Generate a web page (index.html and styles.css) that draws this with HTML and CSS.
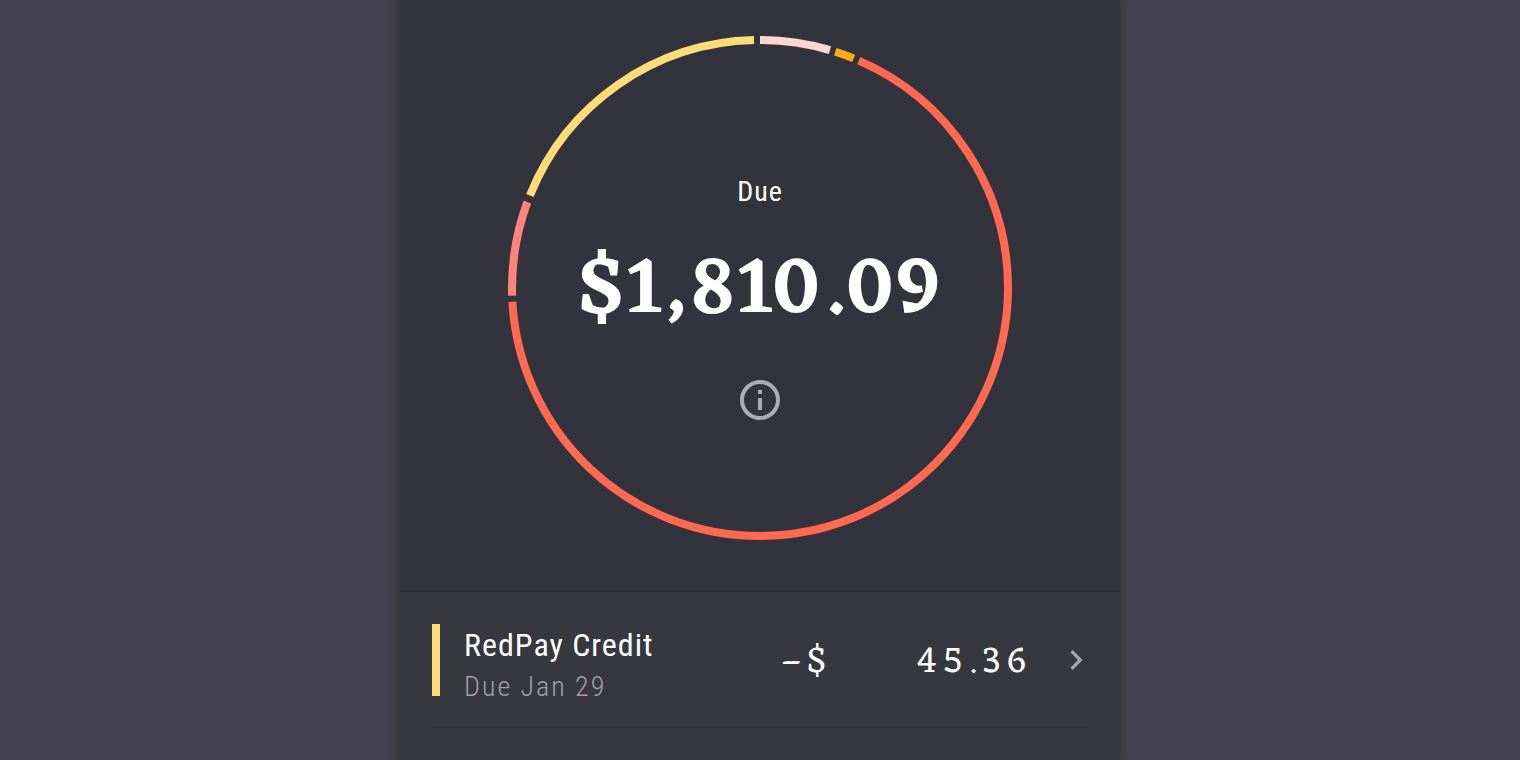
FILE: index.html
```
<!DOCTYPE html>
<html lang="en">
<head>
<meta charset="utf-8">
<meta name="viewport" content="width=device-width, initial-scale=1">
<title>Bills</title>
<link rel="stylesheet" href="styles.css">
</head>
<body>
<main class="panel">
  <section class="summary">
    <div class="chart">
      <svg class="ring" viewBox="0 0 504 504" aria-hidden="true">
        <g fill="none" stroke-width="8" transform="rotate(-90 252 252)">
          <circle cx="252" cy="252" r="248" pathLength="3600" stroke="#ffd7d0" stroke-dasharray="164 3436"/>
          <circle cx="252" cy="252" r="248" pathLength="3600" stroke="#ffac12" stroke-dasharray="45 3555" stroke-dashoffset="-177"/>
          <circle cx="252" cy="252" r="248" pathLength="3600" stroke="#ff6951" stroke-dasharray="2433 1167" stroke-dashoffset="-235"/>
          <circle cx="252" cy="252" r="248" pathLength="3600" stroke="#ff857c" stroke-dasharray="221 3379" stroke-dashoffset="-2682"/>
          <circle cx="252" cy="252" r="248" pathLength="3600" stroke="#ffdc78" stroke-dasharray="667 2933" stroke-dashoffset="-2919"/>
        </g>
      </svg>
      <div class="total">
        <p class="total-label">Due</p>
        <p class="total-amount">$1,810.09</p>
        <button class="info" type="button" aria-label="Information">
          <svg viewBox="0 0 24 24" width="48" height="48" fill="currentColor" aria-hidden="true"><path d="M11 17h2v-6h-2v6zm1-15C6.480 2 2 6.480 2 12s4.480 10 10 10 10-4.480 10-10S17.520 2 12 2zm0 18c-4.410 0-8-3.590-8-8s3.590-8 8-8 8 3.590 8 8-3.590 8-8 8zM11 9h2V7h-2v2z"/></svg>
        </button>
      </div>
    </div>
  </section>
  <ul class="bills">
    <li class="bill">
      <a class="bill-link" href="#redpay">
        <span class="marker"></span>
        <span class="details">
          <span class="name">RedPay Credit</span>
          <span class="due">Due Jan 29</span>
        </span>
        <span class="sign">–$</span>
        <span class="amount">45.36</span>
        <svg class="chevron" viewBox="0 0 24 24" fill="currentColor" aria-hidden="true"><path d="M10 6L8.590 7.410 13.170 12l-4.580 4.590L10 18l6-6z"/></svg>
      </a>
    </li>
  </ul>
</main>
</body>
</html>
```
FILE: styles.css
```
* { box-sizing: border-box; }

body {
  margin: 0;
  background: #444250;
  color: #fff;
  font-family: "Roboto Condensed", "Liberation Sans Narrow", Roboto, sans-serif;
}

.panel {
  width: 100%;
  max-width: 720px;
  min-height: 100vh;
  margin: 0 auto;
  background: #373740;
  box-shadow: -1px 0 6px 4px #383741;
}

.summary {
  display: flex;
  justify-content: center;
  padding: 36px 24px 50px;
  background: #33333d;
  border-bottom: 2px solid #2c2c35;
}

.chart {
  display: grid;
  width: 100%;
  max-width: 504px;
}

.ring, .total { grid-area: 1 / 1; }

.ring { display: block; width: 100%; }

.total {
  display: flex;
  flex-direction: column;
  align-items: center;
  justify-content: center;
  padding-top: 24px;
}

.total-label {
  margin: 0;
  font-size: 28px;
  line-height: 32px;
  letter-spacing: 1px;
}

.total-amount {
  margin: 36px 0;
  font-family: Eczar, "Liberation Serif", serif;
  font-size: 80px;
  font-weight: 600;
  line-height: 96px;
  letter-spacing: 3px;
}

.info {
  display: block;
  padding: 0;
  border: 0;
  background: none;
  color: #adadb1;
}

.info svg { display: block; }

.bills { margin: 0; padding: 0 32px; list-style: none; }

.bill { border-bottom: 2px solid #33333d; }

.bill-link {
  display: flex;
  align-items: flex-start;
  padding: 32px 0 18px;
  color: inherit;
  text-decoration: none;
}

.marker { width: 8px; height: 72px; margin-right: 24px; background: #ffdc78; }

.details { display: flex; flex: 1; flex-direction: column; }

.name { font-size: 32px; line-height: 42px; letter-spacing: 1px; }

.due {
  color: #a0a0a4;
  font-size: 28px;
  font-weight: 300;
  line-height: 42px;
  letter-spacing: 2px;
}

.sign, .amount {
  font-family: Eczar, "Liberation Serif", serif;
  font-size: 36px;
  line-height: 78px;
  letter-spacing: 6px;
}

.amount { width: 200px; text-align: right; }

.chevron { width: 40px; height: 72px; margin: 0 -8px 0 24px; color: #a5a5a9; }
```
